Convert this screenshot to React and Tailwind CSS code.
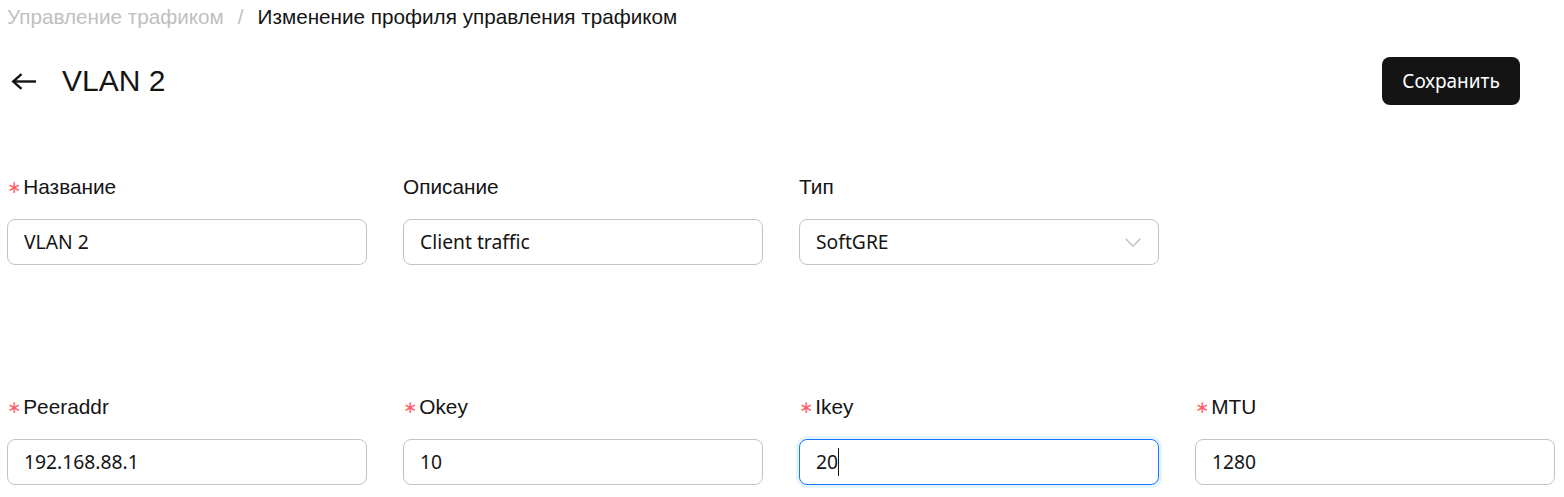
import React from 'react';

const labelFont = { fontFamily: '"Liberation Sans", Arial, sans-serif' };
const valueFont = { fontFamily: '"Noto Sans", "Open Sans", sans-serif' };

const BackArrow = () => (
  <svg width="26" height="17" viewBox="0 0 26 17" fill="none" className="text-[#141414] ml-[4px]">
    <path d="M25 8.5H2" stroke="currentColor" strokeWidth="2.4" />
    <path d="M10.5 1.2L2.2 8.5L10.5 15.8" stroke="currentColor" strokeWidth="2.4" />
  </svg>
);

const Field = ({ label, required, value, select, focused }) => (
  <div className="flex flex-col">
    <div className="flex items-center h-6 mb-5 text-[20.8px] text-[#141414]" style={labelFont}>
      {required && (
        <span
          className="text-[#ff5c6a] text-[17px] mr-[2px] leading-none"
          style={{ fontFamily: '"DejaVu Sans", sans-serif' }}
        >
          ∗
        </span>
      )}
      <span>{label}</span>
    </div>
    <div
      className={`relative flex items-center h-[46px] rounded-lg bg-white px-4 text-[19.3px] text-[#141414] border ${
        focused ? 'border-[#1677ff] ring-[3px] ring-[#e6f4ff]' : 'border-[#c4c4c4]'
      }`}
      style={valueFont}
    >
      <span>{value}</span>
      {focused && <span className="w-px h-[28px] bg-[#141414]" />}
      {select && (
        <svg
          width="16"
          height="9"
          viewBox="0 0 16 9"
          fill="none"
          className="absolute right-[17px] text-[#bfbfbf]"
        >
          <polyline points="0.7,0.7 8,8.2 15.3,0.7" stroke="currentColor" strokeWidth="1.3" />
        </svg>
      )}
    </div>
  </div>
);

export default function App() {
  return (
    <div className="min-h-screen bg-white pl-[7px] pt-[5px]">
      {/* Breadcrumb */}
      <div className="flex items-center h-6 text-[20.7px] gap-[14px]" style={labelFont}>
        <span className="text-[#bfbfbf]">Управление трафиком</span>
        <span className="text-[#bfbfbf]">/</span>
        <span className="text-[#141414]">Изменение профиля управления трафиком</span>
      </div>

      {/* Header */}
      <div className="flex items-center justify-between mt-[28px] pr-[44px]">
        <div className="flex items-center">
          <BackArrow />
          <h1 className="ml-[25px] text-[30px] text-[#141414] leading-none" style={labelFont}>
            VLAN 2
          </h1>
        </div>
        <button
          className="h-[48px] w-[138px] rounded-lg bg-[#141414] text-white text-[19px]"
          style={valueFont}
        >
          Сохранить
        </button>
      </div>

      {/* Row 1 */}
      <div className="grid grid-cols-[repeat(4,360px)] gap-x-9 mt-[70px]">
        <Field label="Название" required value="VLAN 2" />
        <Field label="Описание" value="Client traffic" />
        <Field label="Тип" value="SoftGRE" select />
      </div>

      {/* Row 2 */}
      <div className="grid grid-cols-[repeat(4,360px)] gap-x-9 mt-[130px]">
        <Field label="Peeraddr" required value="192.168.88.1" />
        <Field label="Okey" required value="10" />
        <Field label="Ikey" required value="20" focused />
        <Field label="MTU" required value="1280" />
      </div>
    </div>
  );
}
